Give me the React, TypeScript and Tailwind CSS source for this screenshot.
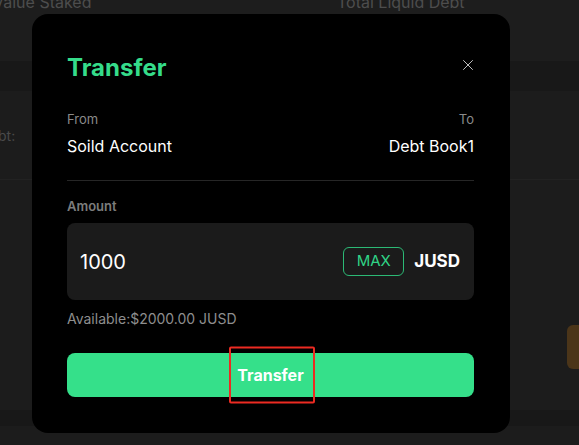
import { X } from "lucide-react";

function TransferModal() {
  return (
    <div className="absolute left-[32px] top-[14px] w-[478px] h-[419px] rounded-[16px] bg-black pl-[35px] pr-[36px] pt-[40px]">
      <div className="flex items-center justify-between h-[28px]">
        <h2 className="text-[24px] font-bold text-[#35dc8a] leading-[28px]">Transfer</h2>
        <X className="w-[18px] h-[18px] mr-[-3px] mt-[-6px] text-[#d4d4d4]" strokeWidth={1.2} />
      </div>

      <div className="mt-[28px] flex justify-between">
        <div>
          <p className="text-[13px] leading-[18px] text-[#8a8a8a]">From</p>
          <p className="mt-[8px] text-[16px] leading-[20px] text-white">Soild Account</p>
        </div>
        <div className="text-right">
          <p className="text-[13px] leading-[18px] text-[#8a8a8a]">To</p>
          <p className="mt-[8px] text-[16px] leading-[20px] text-white">Debt Book1</p>
        </div>
      </div>

      <div className="mt-[24px] h-px bg-[#262626]" />

      <p className="mt-[16px] text-[13px] leading-[18px] font-semibold text-[#7c7c7c]">Amount</p>
      <div className="mt-[8px] h-[77px] rounded-[8px] bg-[#1b1b1b] flex items-center pl-[13px] pr-[14px]">
        <span className="flex-1 text-[20px] text-white">1000</span>
        <button
          type="button"
          className="h-[29px] w-[61px] rounded-[6px] border border-[#2cb975] text-[15px] text-[#30d487]"
        >
          MAX
        </button>
        <span className="ml-[10px] text-[17px] font-bold text-white">JUSD</span>
      </div>

      <p className="mt-[10px] text-[14px] leading-[18px] text-[#8e8e8e]">Available:$2000.00 JUSD</p>

      <div className="relative mt-[25px]">
        <button
          type="button"
          className="w-full h-[44px] rounded-[8px] bg-[#35e08a] text-[16px] font-bold text-white"
        >
          Transfer
        </button>
        <div className="pointer-events-none absolute left-1/2 top-1/2 -translate-y-1/2 -translate-x-[42px] w-[86px] h-[57px] rounded-[2px] border-2 border-[#ec2b22]" />
      </div>
    </div>
  );
}

export default function App() {
  return (
    <div
      className="relative w-[579px] h-[445px] overflow-hidden bg-[#1c1c1c]"
      style={{ fontFamily: "Inter, 'Noto Sans', sans-serif" }}
    >
      <div className="h-[61px] bg-[#1d1d1d] relative">
        <div className="absolute top-[-10px] left-[-7px] right-0 flex text-[16px] text-[#4d4d4d]">
          <span className="w-[344px]">Value Staked</span>
          <span>Total Liquid Debt</span>
        </div>
      </div>
      <div className="h-[30px] bg-[#181818]" />
      <div className="h-[88px] bg-[#1c1c1c] pt-[32px]">
        <span className="ml-[-2px] text-[14px] text-[#4a4a4a]">bt:</span>
      </div>
      <div className="h-px bg-[#222222]" />
      <div className="h-[230px] bg-[#1c1c1c] flex justify-end pt-[145px]">
        <div className="w-[12px] h-[44px] rounded-l-[6px] bg-[#4b3519]" />
      </div>
      <div className="h-[16px] bg-[#181818]" />
      <div className="h-[20px] bg-[#1c1c1c]" />

      <TransferModal />
    </div>
  );
}
